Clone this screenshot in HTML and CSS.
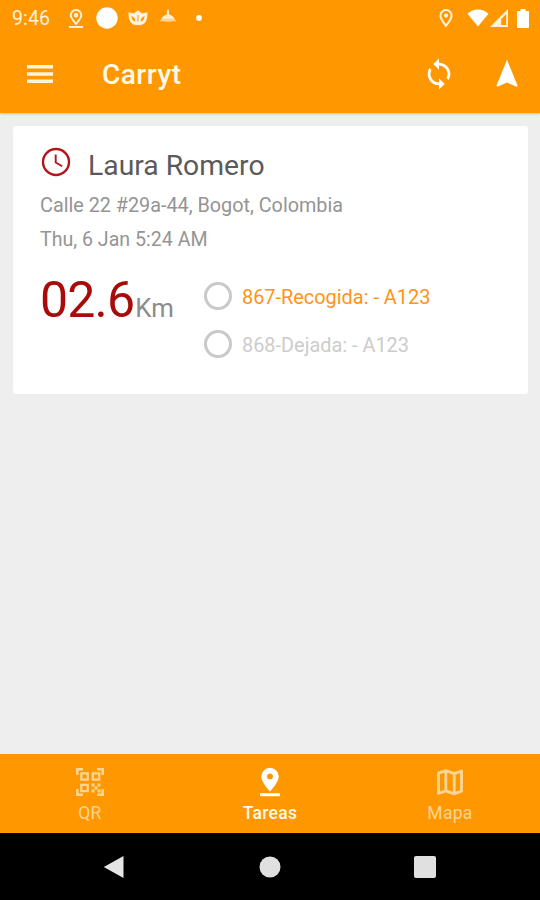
FILE: index.html
```html
<!DOCTYPE html>
<html lang="es">
<head>
<meta charset="utf-8">
<title>Carryt</title>
<link rel="stylesheet" href="styles.css">
</head>
<body>
<div class="screen">
  <div class="status">
    <span class="time">9:46</span>
    <svg class="s-pin" width="14" height="19" viewBox="0 0 14 19" fill="none" stroke="#fff3df" stroke-width="1.9"><path d="M7 15C4 11.500 1.700 9 1.700 6.300a5.300 5.300 0 0 1 10.600 0C12.300 9 10 11.500 7 15z"/><circle cx="7" cy="6.300" r="1.300"/><path d="M0 18h14"/></svg>
    <svg class="s-disc" width="22" height="22" viewBox="0 0 22 22"><circle cx="11" cy="11" r="10.700" fill="#fff"/></svg>
    <svg class="s-mask" width="20" height="16" viewBox="0 0 20 16"><path fill="#fff3df" fill-rule="evenodd" d="M.5 2.200 6 3.600 10 .2l4 3.400 5.500-1.400c0 7-1.500 11.300-6 12.600-1.400.4-2.400.4-3.500.2-1.100.2-2.100.2-3.500-.2C2 13.500.5 9 .5 2.200zM3.500 6c0 3 1.300 5.200 3.800 5.600 0-2.300-1-4.600-3.800-5.600zM16.500 6c-2.800 1-3.800 3.300-3.800 5.600 2.500-.4 3.800-2.600 3.800-5.600zM9.500 5v6.500h1V5z"/></svg>
    <svg class="s-plant" width="18" height="14" viewBox="0 0 18 14" fill="#fff3df"><path d="M9 0c1.300 1.500 1.400 3 .9 5.200 2 .8 4 2 5.600 4.300h-13C4.200 7 6.100 6 8.100 5.200 7.600 3 7.700 1.500 9 0z"/><path d="M1 12.500c.6-2 1.500-3 2.500-4h11c1 1 2 2 2.500 4-3-.8-5 .2-8 .2s-5-1-8-.2z" opacity=".65"/></svg>
    <svg class="s-dot" width="6" height="6" viewBox="0 0 6 6"><circle cx="3" cy="3" r="2.900" fill="#fff"/></svg>
    <svg class="s-loc" width="14" height="19" viewBox="0 0 14 19" fill="none" stroke="#fff3df" stroke-width="2"><path d="M7 16.800C4 13 1.400 9.800 1.400 6.700a5.600 5.600 0 0 1 11.200 0C12.600 9.800 10 13 7 16.800z"/><circle cx="7" cy="6.600" r="2.100" fill="#fff3df" stroke="none"/></svg>
    <svg class="s-wifi" width="22" height="18" viewBox="0 0 22 18"><path fill="#fff" d="M.5 4.800C6.500-.9 15.500-.9 21.500 4.800L11 17.600z"/></svg>
    <svg class="s-signal" width="18" height="18" viewBox="0 0 18 18"><path fill="#fff3df" fill-rule="evenodd" d="M18 0v18H0zM16.200 5v11h-5V10z"/></svg>
    <svg class="s-battery" width="12" height="19" viewBox="0 0 12 19"><path fill="#fff" d="M3.500 0h5v2H11q1 0 1 1v15q0 1-1 1H1q-1 0-1-1V3q0-1 1-1h2.500z"/></svg>
  </div>
  <header class="appbar">
    <svg class="menu" width="26" height="18" viewBox="0 0 26 18" fill="#fff3e0"><path d="M0 0h26v3.500H0zM0 7.250h26v3.500H0zM0 14.500h26V18H0z"/></svg>
    <h1>Carryt</h1>
    <svg class="sync" width="34" height="34" viewBox="0 0 24 24" fill="#fff"><path d="M12 4V1L8 5l4 4V6c3.310 0 6 2.690 6 6 0 1.010-.25 1.970-.7 2.800l1.460 1.460C19.540 15.030 20 13.570 20 12c0-4.420-3.580-8-8-8zm0 14c-3.310 0-6-2.690-6-6 0-1.010.25-1.970.7-2.800L5.240 7.740C4.460 8.970 4 10.430 4 12c0 4.420 3.580 8 8 8v3l4-4-4-4v3z"/></svg>
    <svg class="nav-arrow" width="34" height="34" viewBox="0 0 24 24" fill="#fff"><path d="M12 2 4.500 20.290l.71.71L12 18l6.790 3 .71-.71z"/></svg>
  </header>
  <main>
    <article class="card">
      <div class="who">
        <svg width="30" height="30" viewBox="0 0 30 30" fill="none" stroke="#b3161b" stroke-width="2.400"><circle cx="15" cy="15" r="13"/><path d="M14.700 7.500v8l6.500 3.800" stroke-width="1.900"/></svg>
        <h2>Laura Romero</h2>
      </div>
      <p class="address">Calle 22 #29a-44, Bogot, Colombia</p>
      <p class="date">Thu, 6 Jan 5:24 AM</p>
      <div class="details">
        <div class="distance"><span class="num">02.6</span><span class="unit">Km</span></div>
        <ul>
          <li class="active"><i></i><span>867-Recogida: - A123</span></li>
          <li class="pending"><i></i><span>868-Dejada: - A123</span></li>
        </ul>
      </div>
    </article>
  </main>
  <nav class="tabs">
    <div class="tab qr">
      <svg width="30" height="30" viewBox="0 0 30 30" fill="none" stroke="#ffd494" stroke-width="2.600"><path d="M2.300 8V2.300H8M22 2.300h5.700V8M27.700 22v5.700H22M8 27.700H2.300V22"/><path d="M6.300 6.300h6.400v6.400H6.300zM17.800 6.300h6.400v6.400h-6.400zM6.300 17.800h6.400v6.400H6.300z" stroke-width="2.300"/><path d="M16.500 16.500h3v3h-3zM22.500 16.500h3v3h-3zM19.500 19.500h3v3h-3zM16.500 22.500h3v3h-3zM22.500 22.500h3v3h-3z" fill="#ffd494" stroke="none"/></svg>
      <span>QR</span>
    </div>
    <div class="tab selected">
      <svg width="30" height="30" viewBox="0 0 30 30" fill="#fff"><path fill-rule="evenodd" d="M15 .8a8.800 8.800 0 0 0-8.800 8.800C6.200 15.500 15 24.500 15 24.500s8.800-9 8.800-14.900A8.800 8.800 0 0 0 15 .8zm0 5.700a2.900 2.900 0 1 1 0 5.800 2.900 2.900 0 0 1 0-5.800z"/><path d="M5 26.200h20v3H5z"/></svg>
      <span>Tareas</span>
    </div>
    <div class="tab mapa">
      <svg width="30" height="30" viewBox="0 0 30 30" fill="none" stroke="#ffd494" stroke-width="2.900" stroke-linejoin="round"><path d="m3.500 6.200 7.300-2.500 8.400 3 7.300-2.700v20.200l-7.300 2.600-8.400-3-7.300 2.700zM10.800 3.700v20.100M19.200 6.700v20.100"/></svg>
      <span>Mapa</span>
    </div>
  </nav>
  <footer class="system">
    <svg class="back" width="21" height="24" viewBox="0 0 21 24"><path fill="#e5e5e5" d="M20.500 1v22L.8 12z"/></svg>
    <svg class="home" width="22" height="22" viewBox="0 0 22 22"><circle cx="11" cy="11" r="10.500" fill="#e0e0e0"/></svg>
    <svg class="recent" width="22" height="22" viewBox="0 0 22 22"><rect width="22" height="22" rx="2" fill="#e0e0e0"/></svg>
  </footer>
</div>
</body>
</html>
```
FILE: styles.css
```css
* { box-sizing: border-box; }
body { margin: 0; font-family: Roboto, "Liberation Sans", sans-serif; }
h1, h2, p, ul { margin: 0; padding: 0; font-weight: 400; }
svg { display: block; flex: none; }
.screen { width: 540px; height: 900px; display: flex; flex-direction: column; background: #eee; overflow: hidden; }
.status { height: 36px; flex: none; display: flex; align-items: center; background: #ff9800; color: #fff3df; }
.time { width: 57px; padding-left: 12px; font-size: 19.500px; letter-spacing: .1px; white-space: nowrap; flex: none; margin-right: 12px; }
.s-disc { margin-left: 13px; }
.s-mask { margin-left: 10px; }
.s-plant { margin-left: 11px; margin-bottom: 4px; }
.s-dot { margin-left: 19px; }
.s-loc { margin-left: auto; }
.s-wifi { margin-left: 14px; }
.s-signal { margin-left: 1px; }
.s-battery { margin: 0 11px 0 9px; }
.appbar { height: 77px; flex: none; display: flex; align-items: center; background: #ff9800; padding: 0 16px 1px 27px; box-shadow: 0 1px 2px #0003; }
.appbar h1 { margin-left: 49px; padding-top: 2px; font-size: 28px; font-weight: 500; line-height: 34px; color: #fff8ed; letter-spacing: .5px; }
.sync { margin-left: auto; }
.nav-arrow { margin-left: 34px; }
main { flex: 1; padding: 13px 12px 0 13px; }
.card { height: 268px; background: #fff; border-radius: 3px; padding: 21px 27px 0; box-shadow: 0 0 1px #0001; }
.who { display: flex; height: 38px; padding-left: 1px; }
.who h2 { margin-left: 17px; font-size: 28.300px; line-height: 38px; color: #5a5a5a; white-space: nowrap; }
.address, .date { font-size: 19.800px; line-height: 34px; color: #949494; white-space: nowrap; }
.address { margin-top: 4px; }
.date { font-size: 19.600px; line-height: 33px; }
.details { display: flex; margin-top: 15px; }
.distance { width: 164px; color: #a90a0a; white-space: nowrap; }
.num { font-size: 50px; line-height: 58px; letter-spacing: -.8px; }
.unit { font-size: 25.800px; color: #8c8c8c; margin-left: 1px; }
ul { list-style: none; }
li { display: flex; align-items: center; height: 28px; margin-top: 11px; font-size: 19.900px; white-space: nowrap; }
li + li { margin-top: 20px; }
li i { width: 28px; height: 28px; border: 3px solid #c9c9c9; border-radius: 50%; margin-right: 10px; }
li span { padding-top: 3px; }
.active { color: #ff9418; }
.pending { color: #ccc; }
.tabs { height: 79px; flex: none; display: flex; background: #ff9800; }
.tab { flex: 1; display: flex; flex-direction: column; align-items: center; padding-top: 13px; color: #ffd494; font-size: 17.500px; line-height: 24px; letter-spacing: .3px; }
.tab span { margin-top: 4px; }
.selected { color: #fff8ed; font-weight: 500; }
.system { height: 67px; flex: none; background: #000; display: flex; align-items: center; padding-left: 103px; }
.home { margin-left: 135px; }
.recent { margin-left: 133px; }
```
